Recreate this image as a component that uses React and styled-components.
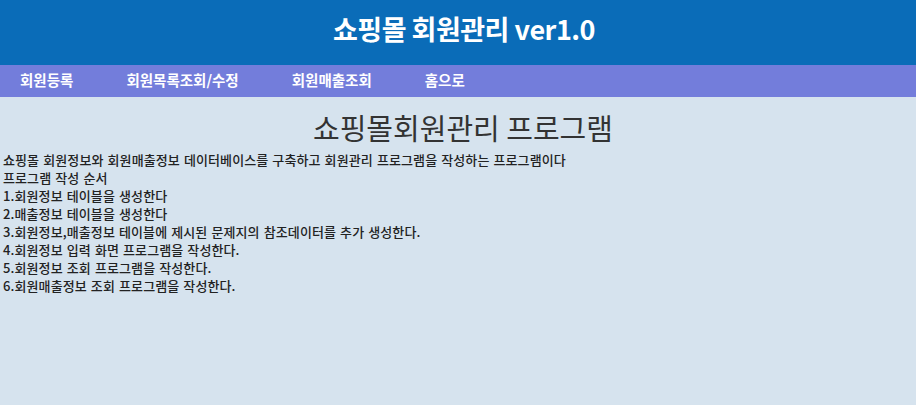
import React from "react";
import styled, { createGlobalStyle } from "styled-components";

const Global = createGlobalStyle`
  html, body {
    margin: 0;
    padding: 0;
    background: #d6e3ee;
    font-family: "Noto Sans CJK KR", "Noto Sans", sans-serif;
  }
`;

const Header = styled.header`
  height: 65px;
  background: #0a6cb8;
  display: flex;
  align-items: center;
  justify-content: center;
`;

const HeaderTitle = styled.h1`
  margin: 0 0 8px 12px;
  color: #fff;
  font-size: 27px;
  font-weight: 700;
  line-height: 1;
  letter-spacing: -0.5px;
`;

const Nav = styled.nav`
  height: 32px;
  background: #737ddb;
  display: flex;
  align-items: center;
  gap: 53px;
  padding-left: 20px;
`;

const NavLink = styled.a`
  color: #fff;
  font-size: 14.5px;
  font-weight: 700;
  text-decoration: none;
  line-height: 1;
  margin-top: -2px;
`;

const Section = styled.section`
  padding: 0 3px;
  color: #222;
`;

const Title = styled.h2`
  margin: 12px 0 5px;
  text-align: center;
  font-size: 29px;
  font-weight: 400;
  line-height: 36px;
  padding-left: 10px;
  color: #333;
`;

const Line = styled.p`
  margin: 0;
  font-size: 13px;
  font-weight: 500;
  line-height: 18px;
  word-spacing: 1px;
  letter-spacing: 0.1px;
  padding-top: ${(p) => (p.$first ? "1px" : "0")};
`;

const lines = [
  "쇼핑몰 회원정보와 회원매출정보 데이터베이스를 구축하고 회원관리 프로그램을 작성하는 프로그램이다",
  "프로그램 작성 순서",
  "1.회원정보 테이블을 생성한다",
  "2.매출정보 테이블을 생성한다",
  "3.회원정보,매출정보 테이블에 제시된 문제지의 참조데이터를 추가 생성한다.",
  "4.회원정보 입력 화면 프로그램을 작성한다.",
  "5.회원정보 조회 프로그램을 작성한다.",
  "6.회원매출정보 조회 프로그램을 작성한다.",
];

export default function App() {
  return (
    <>
      <Global />
      <Header>
        <HeaderTitle>쇼핑몰 회원관리 ver1.0</HeaderTitle>
      </Header>
      <Nav>
        <NavLink href="#">회원등록</NavLink>
        <NavLink href="#">회원목록조회/수정</NavLink>
        <NavLink href="#">회원매출조회</NavLink>
        <NavLink href="#">홈으로</NavLink>
      </Nav>
      <Section>
        <Title>쇼핑몰회원관리 프로그램</Title>
        {lines.map((l, i) => (
          <Line key={i} $first={i === 0}>
            {l}
          </Line>
        ))}
      </Section>
    </>
  );
}
